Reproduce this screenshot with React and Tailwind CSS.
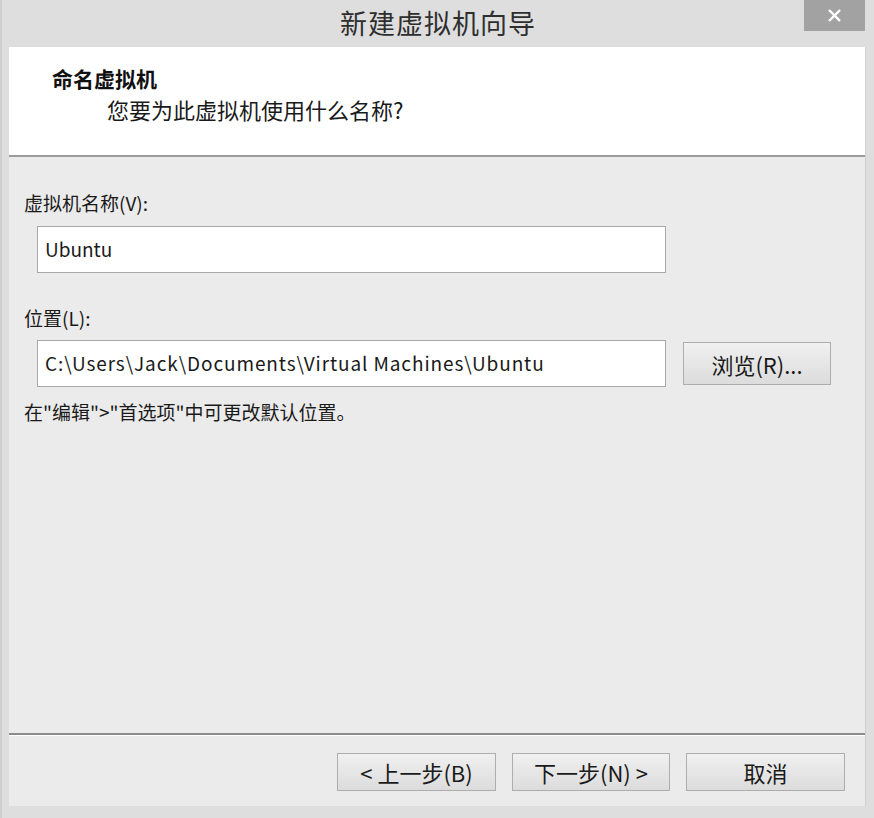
import React from "react";

const font = { fontFamily: '"Segoe UI", "Noto Sans CJK SC", sans-serif' };

const WinButton = ({ children, className = "" }) => (
  <button
    className={`h-[38px] border border-[#adadad] bg-gradient-to-b from-[#f0f0f0] to-[#dcdcdc] text-[22px] leading-none text-[#1a1a1a] ${className}`}
  >
    {children}
  </button>
);

const Field = ({ value, className = "" }) => (
  <div
    className={`h-[47px] border border-[#a8a8a8] bg-white flex items-center pl-[7px] text-[19px] text-[#1a1a1a] ${className}`}
  >
    {value}
  </div>
);

export default function App() {
  return (
    <div
      className="w-[874px] h-[818px] bg-[#dedede] border-l-2 border-[#cfcfcf] flex flex-col"
      style={font}
    >
      {/* Title bar */}
      <div className="relative h-[47px] flex items-center justify-center">
        <span className="text-[27px] text-[#2e2e2e] tracking-[1px]">新建虚拟机向导</span>
        <div className="absolute top-0 right-[9px] w-[61px] h-[31px] bg-[#a2a2a2] flex items-center justify-center">
          <svg width="13" height="13" viewBox="0 0 14 14">
            <path d="M2 2 L12 12 M12 2 L2 12" stroke="#fff" strokeWidth="2.6" strokeLinecap="square" />
          </svg>
        </div>
      </div>

      {/* Window body */}
      <div className="flex-1 flex flex-col ml-[7px] mr-[8px] mb-[12px] border-r border-[#d0d0d0] bg-[#ebebeb]">
        {/* Header */}
        <div className="h-[110px] bg-white border-b-2 border-[#9c9c9c] pl-[43px] pt-[17px]">
          <div className="text-[21px] font-bold leading-[28px] text-[#111]">命名虚拟机</div>
          <div className="text-[22px] leading-[28px] text-[#1a1a1a] pl-[55px] mt-[3px]">
            您要为此虚拟机使用什么名称?
          </div>
        </div>

        {/* Content */}
        <div className="flex-1 pl-[15px] pt-[34px] text-[#1a1a1a]">
          <div className="text-[19px] leading-[24px]">虚拟机名称(V):</div>
          <Field value="Ubuntu" className="w-[629px] ml-[13px] mt-[11px]" />

          <div className="text-[19px] leading-[24px] mt-[33px]">位置(L):</div>
          <div className="flex items-center mt-[10px] ml-[13px] gap-[17px]">
            <Field
              value="C:\Users\Jack\Documents\Virtual Machines\Ubuntu"
              className="w-[629px] tracking-[0.9px]"
            />
            <WinButton className="w-[148px] h-[43px]">浏览(R)...</WinButton>
          </div>

          <div className="text-[19px] leading-[24px] mt-[13px]">在"编辑"&gt;"首选项"中可更改默认位置。</div>
        </div>

        {/* Footer */}
        <div className="border-t-2 border-[#8c8c8c]">
          <div className="border-t border-white h-[71px] flex items-start justify-end pr-[20px] pt-[17px] gap-[16px]">
            <WinButton className="w-[159px]">&lt; 上一步(B)</WinButton>
            <WinButton className="w-[158px]">下一步(N) &gt;</WinButton>
            <WinButton className="w-[159px]">取消</WinButton>
          </div>
        </div>
      </div>
    </div>
  );
}
